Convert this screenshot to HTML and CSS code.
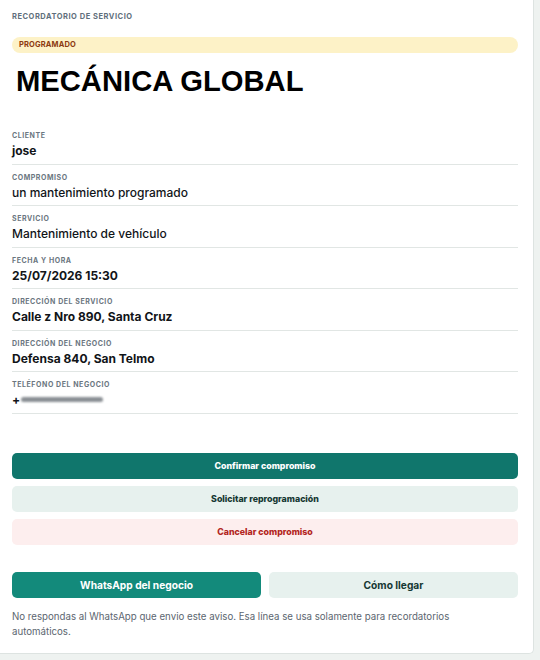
FILE: index.html
```html
<!DOCTYPE html>
<html lang="es">
<head>
<meta charset="utf-8">
<title>Recordatorio de servicio</title>
<link rel="stylesheet" href="styles.css">
</head>
<body>
<main class="card">
  <div class="eyebrow">Recordatorio de servicio</div>
  <div class="status">Programado</div>
  <h1 class="title">MECÁNICA GLOBAL</h1>

  <dl class="fields">
    <div class="field">
      <dt>Cliente</dt>
      <dd class="strong">jose</dd>
    </div>
    <div class="field">
      <dt>Compromiso</dt>
      <dd>un mantenimiento programado</dd>
    </div>
    <div class="field">
      <dt>Servicio</dt>
      <dd>Mantenimiento de vehículo</dd>
    </div>
    <div class="field">
      <dt>Fecha y hora</dt>
      <dd class="strong">25/07/2026 15:30</dd>
    </div>
    <div class="field">
      <dt>Dirección del servicio</dt>
      <dd class="strong">Calle z Nro 890, Santa Cruz</dd>
    </div>
    <div class="field">
      <dt>Dirección del negocio</dt>
      <dd class="strong">Defensa 840, San Telmo</dd>
    </div>
    <div class="field">
      <dt>Teléfono del negocio</dt>
      <dd class="strong phone">+<span class="blur" aria-hidden="true"></span></dd>
    </div>
  </dl>

  <div class="actions">
    <button class="btn btn-primary">Confirmar compromiso</button>
    <button class="btn btn-soft">Solicitar reprogramación</button>
    <button class="btn btn-danger">Cancelar compromiso</button>
  </div>

  <div class="links">
    <button class="btn btn-lg btn-whatsapp">WhatsApp del negocio</button>
    <button class="btn btn-lg btn-soft">Cómo llegar</button>
  </div>

  <p class="note">No respondas al WhatsApp que envio este aviso. Esa línea se usa solamente para recordatorios automáticos.</p>
</main>
</body>
</html>
```

FILE: styles.css
```css
* { box-sizing: border-box; }

html, body {
  margin: 0;
  padding: 0;
}

body {
  background: #eef2f0;
  font-family: Inter, "Noto Sans", sans-serif;
  color: #111418;
}

.card {
  width: 534px;
  background: #ffffff;
  border-right: 1px solid #dde3e1;
  border-bottom: 1px solid #dde3e1;
  border-bottom-right-radius: 5px;
  padding: 12px 15px 14px 12px;
}

.eyebrow {
  font-size: 7.5px;
  font-weight: 700;
  letter-spacing: 0.07em;
  text-transform: uppercase;
  color: #5f6f7c;
  line-height: 10px;
}

.status {
  margin-top: 15px;
  height: 16px;
  border-radius: 8px;
  background: #fdf2c7;
  color: #8c3a10;
  font-size: 7.5px;
  font-weight: 700;
  letter-spacing: 0.02em;
  text-transform: uppercase;
  line-height: 16px;
  padding-left: 7px;
}

.title {
  margin: 11px 0 0 4px;
  font-family: "Liberation Sans", Arial, sans-serif;
  font-size: 29.2px;
  font-weight: 700;
  line-height: 34px;
  color: #000;
}

.fields {
  margin: 25px 0 0;
}

.field {
  border-bottom: 1px solid #e1e6e4;
  padding: 8px 0 0;
  height: 41.5px;
}

.field dt {
  font-size: 7px;
  font-weight: 700;
  letter-spacing: 0.08em;
  text-transform: uppercase;
  color: #6b7680;
  line-height: 10px;
}

.field dd {
  margin: 2px 0 0;
  font-size: 12px;
  font-weight: 500;
  line-height: 16px;
  color: #111418;
}

.field dd.strong { font-weight: 700; }

.phone .blur {
  display: inline-block;
  vertical-align: middle;
  width: 82px;
  height: 5px;
  margin-left: 1px;
  margin-top: -3px;
  background: #8a8f94;
  border-radius: 3px;
  filter: blur(1.2px);
}

.actions {
  margin-top: 39px;
  display: flex;
  flex-direction: column;
  gap: 7px;
}

.btn {
  display: block;
  width: 100%;
  height: 26px;
  border: 0;
  border-radius: 5px;
  font-family: Inter, "Noto Sans", sans-serif;
  font-size: 8.8px;
  font-weight: 800;
  text-align: center;
  cursor: pointer;
  padding: 0;
}

.btn-primary { background: #10766c; color: #ffffff; }
.btn-soft { background: #e7f1ee; color: #163833; }
.btn-danger { background: #fdeeee; color: #b3261e; }

.links {
  margin-top: 27px;
  display: grid;
  grid-template-columns: 1fr 1fr;
  gap: 8px;
}

.btn-lg { font-size: 10.2px; font-weight: 700; }
.btn-whatsapp { background: #138a7b; color: #ffffff; }

.note {
  margin: 11px 0 0;
  max-width: 480px;
  font-size: 9.7px;
  line-height: 15px;
  color: #5c6670;
}
```
